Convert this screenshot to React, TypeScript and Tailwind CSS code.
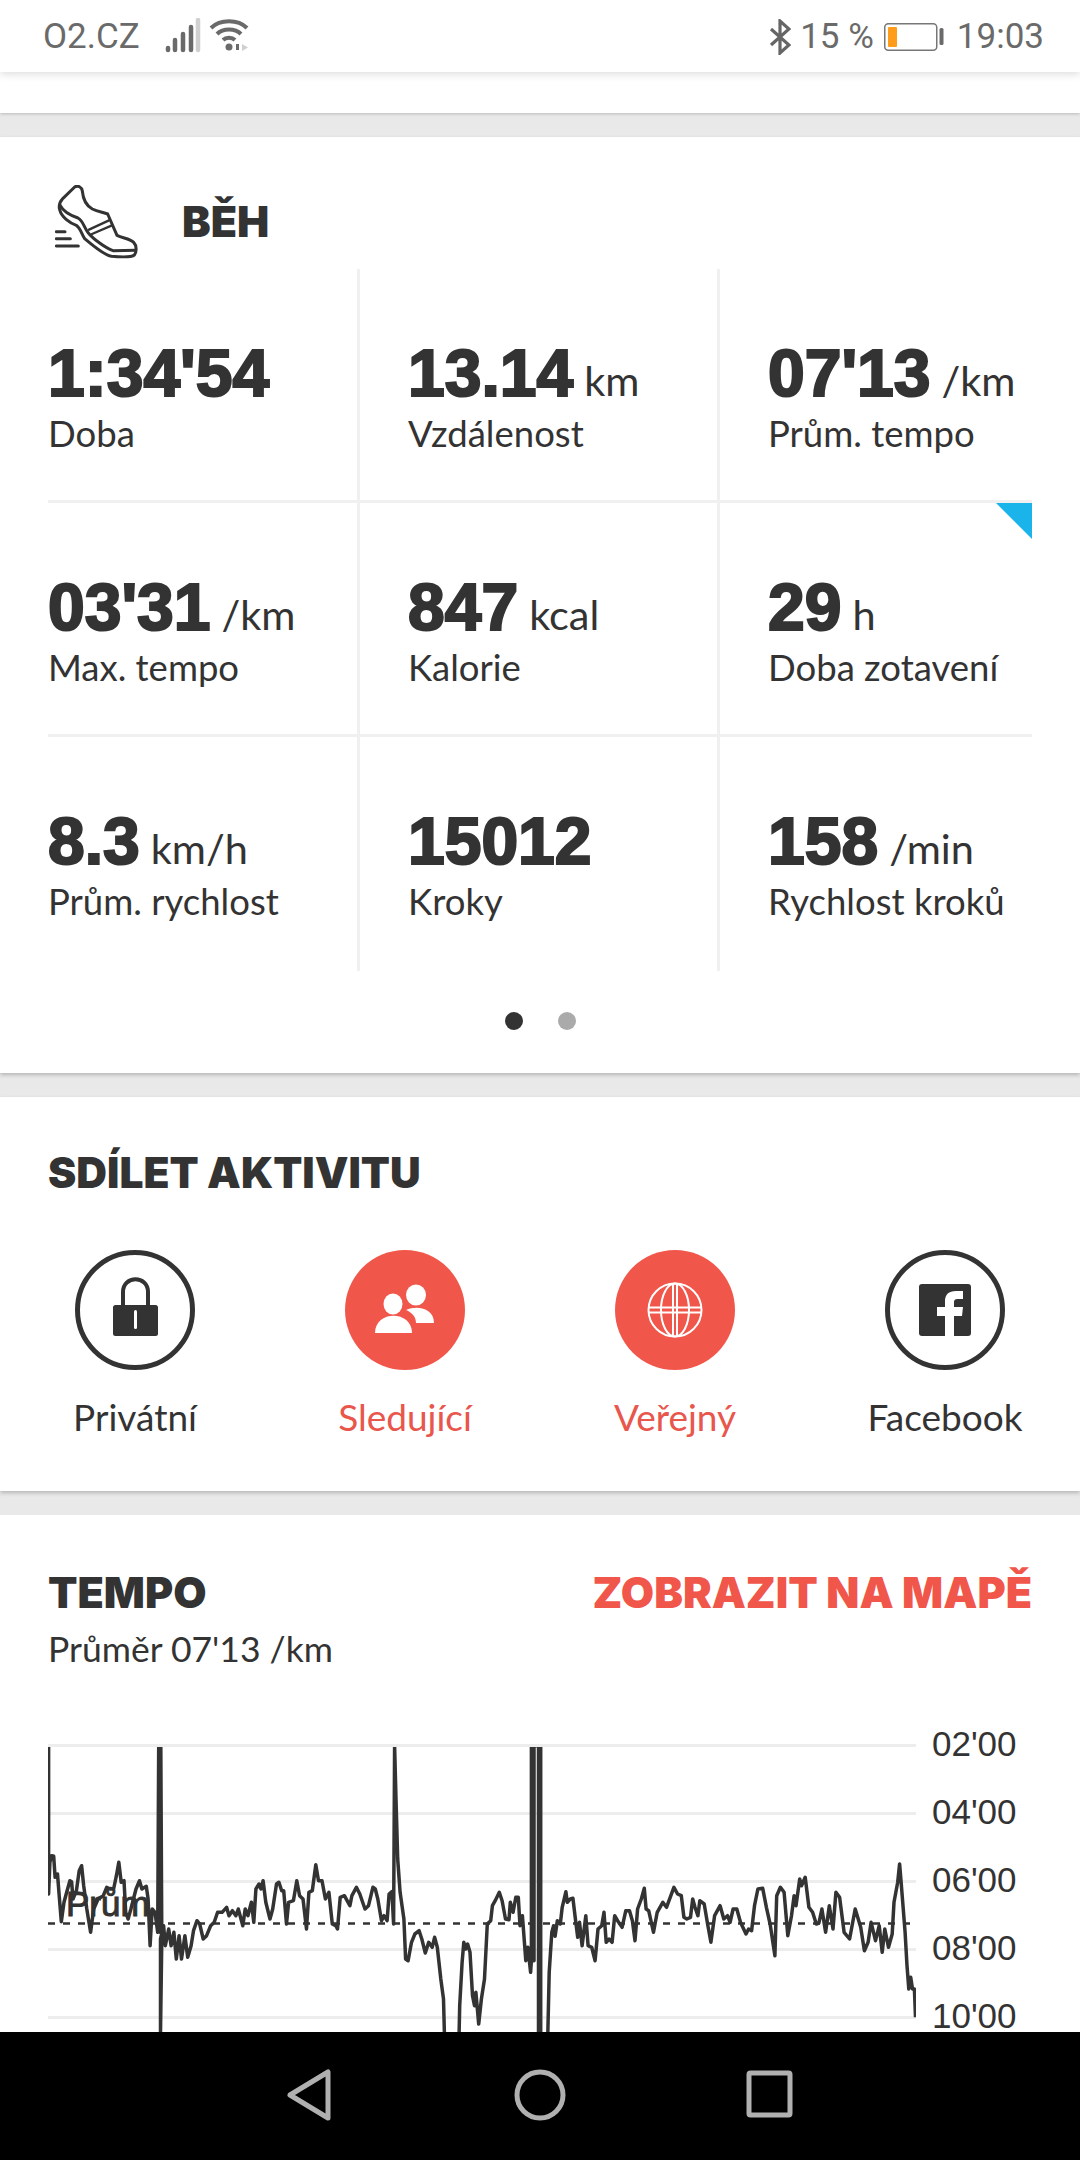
import { type ReactNode } from 'react';

const ink = '#333333';

const STATS = [
  { value: "1:34'54", unit: '', label: 'Doba' },
  { value: '13.14', unit: 'km', label: 'Vzdálenost' },
  { value: "07'13", unit: '/km', label: 'Prům. tempo' },
  { value: "03'31", unit: '/km', label: 'Max. tempo' },
  { value: '847', unit: 'kcal', label: 'Kalorie' },
  { value: '29', unit: 'h', label: 'Doba zotavení' },
  { value: '8.3', unit: 'km/h', label: 'Prům. rychlost' },
  { value: '15012', unit: '', label: 'Kroky' },
  { value: '158', unit: '/min', label: 'Rychlost kroků' },
];

const PACE_LABELS = ["02'00", "04'00", "06'00", "08'00", "10'00"];

// pace trace, read off in crop coordinates and scaled to page pixels below
const TRACE_LEFT = [
  [141,140],[141,585],[145,490],[150,470],[156,472],[160,535],[167,525],[172,590],[178,668],[186,610],[195,575],[203,545],[208,548],[212,600],[222,575],[230,515],[237,500],[243,560],[252,630],[263,700],[272,630],[285,600],[300,590],[310,565],[320,570],[330,570],[338,530],[345,490],[352,550],[360,545],[365,640],[372,660],[380,630],[395,570],[405,545],[412,570],[425,562],[430,600],[436,740],[442,630],[450,640],[458,700],[461,140],[464,700],[467,140],[470,720],[466,1000],[466,720],[475,680],[480,740],[490,690],[497,740],[505,700],[512,780],[520,710],[527,780],[537,710],[545,775],[555,740],[562,695],[572,665],[580,675],[590,720],[600,710],[612,680],[622,670],[632,640],[645,640],[658,625],[665,650],[675,635],[685,650],[692,630],[705,680],[712,630],[720,650],[730,610],[737,670],[743,570],[752,555],[758,570],[764,545],[772,610],[784,660],[792,630],[803,555],[810,550],[818,575],[824,575],[832,675],[838,610],[852,605],[862,545],[870,590],[880,600],[890,690],[897,580],[907,575],[917,497],[925,545],[935,545],[945,600],[955,580],[965,675],[975,680],[980,690],[988,595],[1000,590],[1008,605],[1016,620],[1022,590],[1035,565],[1045,585],[1060,630],[1070,620],[1083,565],[1090,570],[1097,600],[1108,665],[1115,650],[1124,665],[1130,585],[1138,578],[1143,675],[1146,140],[1150,300],[1155,480],[1162,580],[1173,660],[1178,780],[1185,785],[1195,730],[1205,705],[1217,695],[1225,720],[1235,762],[1245,730],[1255,745],[1262,715],[1270,745],[1280,840],[1288,900],[1292,1060],[1332,1060],[1335,920],[1342,790],[1347,730],[1352,750],[1358,735],[1365,760],[1372,890],[1378,920],[1382,880],[1390,975],[1398,900],[1407,840],[1415,675],[1425,665],[1430,620],[1438,605],[1450,580],[1458,605],[1468,660],[1478,662],[1482,610],[1490,640],[1498,595],[1505,595],[1510,680],[1517,650],[1527,785],[1533,745],[1541,820],
].map(([x, y]) => [x / 2.904, 1700 + y / 3]);

const TRACE_RIGHT = [
  [85,785],[85,140],[89,785],[92,140],[92,785],[92,140],[104,140],[104,1060],[107,140],[110,140],[110,1060],[128,1060],[133,820],[140,700],[145,680],[149,712],[155,665],[163,675],[168,625],[178,578],[182,610],[190,600],[197,598],[205,670],[210,715],[215,670],[222,740],[232,650],[238,740],[248,745],[257,785],[265,690],[275,680],[281,640],[287,730],[295,720],[303,730],[310,650],[318,665],[330,685],[340,635],[350,635],[358,665],[365,725],[372,630],[382,600],[390,568],[395,630],[402,635],[415,700],[425,640],[440,610],[450,625],[460,595],[470,565],[480,585],[490,590],[497,655],[505,660],[515,655],[521,600],[527,625],[535,650],[540,605],[552,615],[562,680],[570,730],[580,650],[595,620],[605,660],[615,650],[622,670],[630,630],[640,630],[650,670],[665,705],[672,690],[680,695],[688,620],[697,570],[710,568],[720,625],[730,675],[743,770],[748,590],[758,565],[768,580],[778,710],[788,650],[795,590],[800,620],[810,540],[815,560],[825,535],[835,625],[845,640],[855,675],[862,672],[870,630],[880,700],[890,620],[900,690],[908,580],[918,595],[930,700],[945,720],[960,630],[975,685],[985,755],[995,730],[1003,670],[1015,725],[1025,680],[1033,760],[1040,690],[1050,745],[1060,705],[1065,610],[1075,550],[1080,495],[1085,560],[1095,700],[1100,800],[1105,870],[1110,835],[1115,870],[1120,870],[1123,955],
].map(([x, y]) => [500 + x / 2.703, 1700 + y / 3]);

const tracePoints = [...TRACE_LEFT, ...TRACE_RIGHT].map(([x, y]) => `${x.toFixed(1)},${y.toFixed(1)}`).join(' ');

function SignalIcon() {
  return (
    <svg width="36" height="36" viewBox="0 0 36 36" className="ml-[25px] mt-[-2px]">
      <g strokeWidth="4.5" strokeLinecap="round">
        <path d="M3 32v-2" stroke="#6a6a6a" />
        <path d="M10 32V22" stroke="#6a6a6a" />
        <path d="M18 32V16" stroke="#6a6a6a" />
        <path d="M26 32V9" stroke="#6a6a6a" />
        <path d="M33 32V2" stroke="#d0d0d0" />
      </g>
    </svg>
  );
}

function WifiIcon() {
  return (
    <svg width="42" height="36" viewBox="0 0 42 36" className="ml-[8px] mt-[-2px]">
      <g fill="none" stroke="#6a6a6a" strokeWidth="4">
        <path d="M2 10C11 1 29 1 38 10" />
        <path d="M8 16C14 10 26 10 32 16" />
        <path d="M14 22C17 19 23 19 26 22" />
      </g>
      <circle cx="20" cy="29" r="3.5" fill="#6a6a6a" />
      <path d="M27 26v6h3v-6z" fill="#6a6a6a" />
      <path d="M33 26l6 3.5-6 3.5z" fill="#cfcfcf" />
    </svg>
  );
}

function BluetoothIcon() {
  return (
    <svg width="22" height="36" viewBox="0 0 22 36" fill="none" stroke="#666666" strokeWidth="3.2">
      <path d="M2 10l18 16-9 8V2l9 8L2 26" />
    </svg>
  );
}

function BatteryIcon() {
  return (
    <svg width="60" height="28" viewBox="0 0 60 28" className="block">
      <rect x="0.75" y="0.75" width="52" height="26.5" rx="3.5" fill="none" stroke="#777777" strokeWidth="1.5" />
      <rect x="4" y="4" width="9" height="20" rx="1" fill="#ff9d1a" />
      <rect x="55.5" y="5" width="4" height="17" rx="1.5" fill="#6a6a6a" />
    </svg>
  );
}

function ShoeIcon() {
  return (
    <svg width="84" height="74" viewBox="76 44 252 222" fill="none" stroke={ink} strokeWidth="9" strokeLinecap="round" strokeLinejoin="round">
      <path d="M135 50C145 44 156 50 158 62C160 85 168 105 188 116C205 124 222 126 234 131L262 195C280 204 300 204 312 216C322 226 321 246 314 254C306 261 270 260 245 258C225 254 200 235 165 205C155 190 152 172 140 165C120 158 95 140 90 118C86 105 90 95 100 84Z" />
      <path d="M92 106C100 122 118 134 145 143C160 150 163 172 176 188C190 205 225 232 250 241L318 240" />
      <path d="M178 178L238 150M187 191L247 165" strokeWidth="7" />
      <path d="M80 184H106M80 205H122M80 227H146" />
    </svg>
  );
}

function LockGlyph() {
  return (
    <svg width="120" height="120" viewBox="0 0 120 120">
      <path d="M48 56V42C48 25 73 25 73 42V56" fill="none" stroke={ink} strokeWidth="4" />
      <rect x="38" y="55" width="45" height="31" rx="2.5" fill={ink} />
      <rect x="59" y="60" width="3" height="19" rx="1.5" fill="#ffffff" />
    </svg>
  );
}

function PeopleGlyph() {
  return (
    <svg width="120" height="120" viewBox="0 0 120 120" fill="#ffffff">
      <ellipse cx="48" cy="54" rx="9.5" ry="10.5" />
      <ellipse cx="71" cy="45" rx="10" ry="10.5" />
      <path d="M30 83C30 60 67 60 67 83Z" />
      <path d="M61 60C72 55 89 58 89 73H71C71 66 66 62 61 60Z" />
    </svg>
  );
}

function GlobeGlyph() {
  return (
    <svg width="120" height="120" viewBox="0 0 120 120" fill="none" stroke="#ffffff" strokeWidth="2">
      <circle cx="60" cy="60" r="26.5" />
      <ellipse cx="60" cy="60" rx="14" ry="26.5" />
      <path d="M58 33.5V86.5M62 33.5V86.5M33.5 57.5H86.5M33.5 62.5H86.5" />
    </svg>
  );
}

function FacebookGlyph() {
  return (
    <svg width="120" height="120" viewBox="0 0 120 120">
      <rect x="34" y="34" width="52" height="52" rx="3" fill={ink} />
      <path d="M69 86V66H77L78 57H69V52Q69 49 72.5 49H78V41H71Q60 41 60 51V57H52V66H60V86Z" fill="#ffffff" />
    </svg>
  );
}

function NavBar() {
  return (
    <div className="relative z-10 flex h-[128px] shrink-0 items-center bg-black pb-[2px]">
      <svg width="1080" height="60" viewBox="0 0 1080 60" fill="none" stroke="#b0b0b0" strokeWidth="5" strokeLinejoin="round">
        <path d="M328 7V53L290 30Z" />
        <circle cx="540" cy="30" r="23" />
        <rect x="749" y="8" width="41" height="42" rx="1.5" />
      </svg>
    </div>
  );
}

function StatusBar() {
  return (
    <div className="relative z-10 flex h-[72px] shrink-0 items-center bg-white pl-[43px] pr-[36px] pt-[1px] text-[35px] leading-none text-[#6a6a6a] shadow-[0_2px_8px_rgba(0,0,0,0.14)] [font-family:Roboto,sans-serif]">
      <span>O2.CZ</span>
      <SignalIcon />
      <WifiIcon />
      <div className="ml-auto flex items-center">
        <BluetoothIcon />
        <span className="ml-[9px]">15 %</span>
        <span className="ml-[10px]"><BatteryIcon /></span>
        <span className="ml-[13px]">19:03</span>
      </div>
    </div>
  );
}

function StatCell({ value, unit, label, index }: { value: string; unit: string; label: string; index: number }) {
  const col = index % 3;
  const row = Math.floor(index / 3);
  const borders = `${col < 2 ? 'border-r-[3px] border-r-[#f0f0f0]' : ''} ${row < 2 ? 'border-b-[3px] border-b-[#f0f0f0]' : ''}`;

  return (
    <div className={`relative h-[234px] pt-[67px] ${col === 0 ? 'pl-0' : 'pl-[48px]'} ${borders}`}>
      {index === 5 ? (
        <svg width="36" height="36" viewBox="0 0 36 36" className="absolute right-0 top-0">
          <path d="M0 0H36V36Z" fill="#1ab4eb" />
        </svg>
      ) : null}
      <div className="flex h-[77px] items-baseline whitespace-nowrap leading-[74px] text-[#333333]">
        <span className="text-[66px] font-bold [-webkit-text-stroke:2.2px_#333333] [font-family:'Liberation_Sans',sans-serif]">{value}</span>
        {unit ? <span className="ml-[11px] text-[41.5px] [font-family:Lato,sans-serif]">{unit}</span> : null}
      </div>
      <div className="text-[36.5px] leading-[40px] text-[#333333] [font-family:Lato,sans-serif]">{label}</div>
    </div>
  );
}

function ShareItem({ label, active, children }: { label: string; active?: boolean; children: ReactNode }) {
  return (
    <div className="flex flex-col items-center">
      <div className={active
        ? 'h-[120px] w-[120px] rounded-full bg-[#f1564b]'
        : 'grid h-[120px] w-[120px] place-items-center rounded-full border-[5px] border-[#333333]'}>
        {children}
      </div>
      <span className={`mt-[25px] text-[37px] leading-[44px] [font-family:Lato,sans-serif] ${active ? 'text-[#e8564c]' : 'text-[#333333]'}`}>{label}</span>
    </div>
  );
}

function PaceChart() {
  return (
    <div className="mt-[72px] flex items-start pl-[48px]">
      <svg width="868" height="292" viewBox="48 1744 868 292" className="shrink-0">
        <defs>
          <clipPath id="pace-clip">
            <rect x="48" y="1748" width="868" height="290" />
          </clipPath>
        </defs>
        <g stroke="#ededed" strokeWidth="3">
          <path d="M48 1746.5H916M48 1814.5H916M48 1882.5H916M48 1950.5H916M48 2018.5H916" />
        </g>
        <path d="M48 1924.5H916" stroke={ink} strokeWidth="2.5" strokeDasharray="7 8" />
        <text x="66" y="1917" fontSize="35" fill={ink} stroke={ink} strokeWidth="1" fontFamily="Liberation Sans, sans-serif">Prům</text>
        <polyline points={tracePoints} clipPath="url(#pace-clip)" fill="none" stroke={ink} strokeWidth="3.5" strokeLinejoin="round" />
      </svg>
      <div className="ml-[16px] mt-[-33px] flex flex-col text-[35px] leading-[68px] text-[#333333] [font-family:'Liberation_Sans',sans-serif]">
        {PACE_LABELS.map((label) => (
          <span key={label}>{label}</span>
        ))}
      </div>
    </div>
  );
}

export default function App() {
  return (
    <div className="flex h-[2160px] w-[1080px] flex-col overflow-hidden bg-white">
      <StatusBar />

      <div className="min-h-0 flex-1 overflow-hidden bg-[#e9e9e9]">
        <div className="h-[41px] bg-white shadow-[0_1px_3px_rgba(0,0,0,0.2)]" />

        <section className="mt-[24px] h-[936px] bg-white shadow-[0_2px_4px_rgba(0,0,0,0.22)]">
          <div className="flex h-[132px] items-start pl-[55px] pt-[48px]">
            <ShoeIcon />
            <h2 className="ml-[43px] mt-[12px] text-[43px] font-black leading-[48px] text-[#333333] [font-family:Inter,sans-serif]">BĚH</h2>
          </div>
          <div className="mx-[48px] grid grid-cols-[312px_360px_312px]">
            {STATS.map((stat, index) => (
              <StatCell key={stat.label} index={index} {...stat} />
            ))}
          </div>
          <div className="mt-[41px] flex justify-center gap-[35px]">
            <span className="h-[18px] w-[18px] rounded-full bg-[#333333]" />
            <span className="h-[18px] w-[18px] rounded-full bg-[#aaaaaa]" />
          </div>
        </section>

        <section className="mt-[24px] h-[394px] bg-white pt-[52px] shadow-[0_2px_4px_rgba(0,0,0,0.22)]">
          <h2 className="pl-[48px] text-[42.5px] font-black leading-[48px] text-[#333333] [font-family:Inter,sans-serif]">SDÍLET AKTIVITU</h2>
          <div className="mt-[53px] grid grid-cols-4">
            <ShareItem label="Privátní"><div className="m-[-5px]"><LockGlyph /></div></ShareItem>
            <ShareItem label="Sledující" active><PeopleGlyph /></ShareItem>
            <ShareItem label="Veřejný" active><GlobeGlyph /></ShareItem>
            <ShareItem label="Facebook"><div className="m-[-5px]"><FacebookGlyph /></div></ShareItem>
          </div>
        </section>

        <section className="mt-[24px] h-[560px] bg-white pt-[53px]">
          <div className="flex items-baseline justify-between px-[48px] text-[43px] font-black leading-[48px] [font-family:Inter,sans-serif]">
            <h2 className="text-[#333333]">TEMPO</h2>
            <span className="text-[#f1564b]">ZOBRAZIT NA MAPĚ</span>
          </div>
          <p className="mt-[11px] pl-[48px] text-[35.5px] leading-[44px] text-[#333333] [font-family:Lato,sans-serif]">Průměr 07'13 /km</p>
          <PaceChart />
        </section>
      </div>

      <NavBar />
    </div>
  );
}
